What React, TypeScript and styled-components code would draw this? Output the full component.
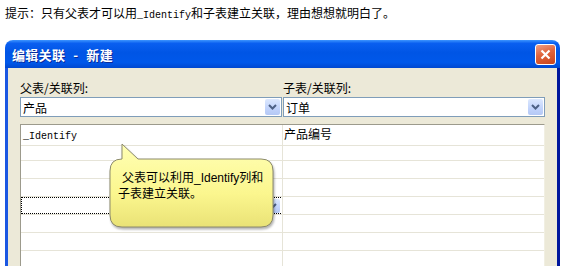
import styled, { createGlobalStyle } from "styled-components";

const GlobalStyle = createGlobalStyle`
  html, body {
    margin: 0;
    padding: 0;
    background: #ffffff;
    overflow: hidden;
  }
  body {
    width: 580px;
    height: 266px;
    font-family: "Noto Sans CJK SC", "Liberation Sans", sans-serif;
    color: #000;
  }
`;

const Hint = styled.p`
  margin: 0;
  height: 40px;
  box-sizing: border-box;
  padding: 5px 0 0 5px;
  font-size: 12px;
  line-height: 16px;
`;

const Mono = styled.span`
  font-family: "Liberation Mono", monospace;
  font-size: 10px;
`;

const Window = styled.div`
  margin-left: 5px;
  width: 555px;
  height: 226px;
  display: flex;
  flex-direction: column;
  border-radius: 8px 8px 0 0;
  overflow: hidden;
`;

const TitleBar = styled.div`
  height: 28px;
  flex: none;
  display: flex;
  align-items: center;
  justify-content: space-between;
  padding: 1px 4px 0 7px;
  box-sizing: border-box;
  background: linear-gradient(
    180deg,
    #3d95ff 0%,
    #0a5ff0 12%,
    #0055e5 45%,
    #0058ea 80%,
    #0048d0 100%
  );
`;

const Title = styled.span`
  color: #fff;
  font-size: 13px;
  font-weight: 700;
  text-shadow: 1px 1px 0 #0a2a9a;
  letter-spacing: 0.3px;
`;

const Sep = styled.span`
  margin: 0 8px;
`;

const CloseButton = styled.div`
  width: 21px;
  height: 21px;
  box-sizing: border-box;
  border: 1px solid #fff;
  border-radius: 3px;
  background: linear-gradient(160deg, #f0a088 0%, #e0643c 45%, #c8441c 100%);
  display: flex;
  align-items: center;
  justify-content: center;
`;

const Body = styled.div`
  flex: 1;
  min-height: 0;
  display: flex;
  flex-direction: column;
  background: #ece9d8;
  border-left: 3px solid #1a57e2;
  border-right: 3px solid #00169c;
  padding: 13px 12px 0 12px;
`;

const Fields = styled.div`
  display: grid;
  grid-template-columns: 262px 1fr;
  column-gap: 1px;
`;

const Field = styled.div`
  display: flex;
  flex-direction: column;
  gap: 2px;
`;

const Label = styled.label`
  font-size: 12px;
  line-height: 14px;
  height: 14px;
`;

const Combo = styled.div`
  height: 20px;
  box-sizing: border-box;
  border: 1px solid #7f9db9;
  background: #fff;
  display: flex;
  align-items: center;
`;

const ComboText = styled.span`
  flex: 1;
  padding-left: 2px;
  font-size: 12px;
`;

const DropButton = styled.div<{ $h?: number }>`
  width: 15px;
  height: ${(p) => p.$h ?? 16}px;
  margin: 1px;
  border-radius: 2px;
  background: linear-gradient(180deg, #dce8fe 0%, #c1d3fb 60%, #b4c8f5 100%);
  display: flex;
  align-items: center;
  justify-content: center;
`;

const Chevron = () => (
  <svg width="9" height="6" viewBox="0 0 9 6">
    <path d="M1 1 L4.5 4.5 L8 1" fill="none" stroke="#4d6185" strokeWidth="2" />
  </svg>
);

const DataGrid = styled.div`
  position: relative;
  flex: 1;
  margin-top: 7px;
  border: 1px solid;
  border-bottom: none;
  border-color: #9c9a8c #f1efe2 #f1efe2 #9c9a8c;
  background: #fff;
  overflow: hidden;
`;

const Row = styled.div`
  display: grid;
  grid-template-columns: 262px 1fr;
  height: 18px;
`;

const Cell = styled.div<{ $first?: boolean }>`
  box-sizing: border-box;
  border-bottom: 1px solid #e6e4d8;
  border-right: ${(p) => (p.$first ? "1px solid #e6e4d8" : "none")};
  padding-left: ${(p) => (p.$first ? 2 : 1)}px;
  font-size: 12px;
  line-height: 17px;
  white-space: nowrap;
`;

const EditCombo = styled.div`
  height: 17px;
  margin-left: -2px;
  margin-right: 1px;
  box-sizing: border-box;
  border: 1px dotted #000;
  border-right: none;
  display: flex;
  justify-content: flex-end;
  align-items: center;
`;

const Balloon = styled.div`
  position: absolute;
  left: 87px;
  top: 17px;
  width: 172px;
  height: 92px;
`;

const BalloonShape = styled.svg`
  position: absolute;
  left: 0;
  top: 0;
  filter: drop-shadow(1px 2px 1px rgba(0, 0, 0, 0.3));
`;

const BalloonText = styled.p`
  position: relative;
  margin: 0;
  padding: 28px 0 0 10px;
  font-family: "Liberation Sans", "Noto Sans CJK SC", sans-serif;
  font-size: 12px;
  line-height: 16px;
  text-indent: 4px;
`;

const rows = [
  ["_Identify", "产品编号"],
  ["", ""],
  ["", ""],
  ["", ""],
  ["edit", ""],
  ["", ""],
  ["", ""],
  ["", ""],
];

export default function App() {
  return (
    <>
      <GlobalStyle />
      <Hint>
        提示：只有父表才可以用<Mono>_Identify</Mono>和子表建立关联，理由想想就明白了。
      </Hint>
      <Window>
        <TitleBar>
          <Title>
            编辑关联<Sep>-</Sep>新建
          </Title>
          <CloseButton>
            <svg width="11" height="11" viewBox="0 0 11 11">
              <path d="M1.5 1.5 L9.5 9.5 M9.5 1.5 L1.5 9.5" stroke="#fff" strokeWidth="2.2" />
            </svg>
          </CloseButton>
        </TitleBar>
        <Body>
          <Fields>
            <Field>
              <Label>父表/关联列:</Label>
              <Combo>
                <ComboText>产品</ComboText>
                <DropButton>
                  <Chevron />
                </DropButton>
              </Combo>
            </Field>
            <Field>
              <Label>子表/关联列:</Label>
              <Combo>
                <ComboText>订单</ComboText>
                <DropButton>
                  <Chevron />
                </DropButton>
              </Combo>
            </Field>
          </Fields>
          <DataGrid>
            {rows.map(([a, b], i) => (
              <Row key={i}>
                <Cell $first>
                  {a === "edit" ? (
                    <EditCombo>
                      <DropButton $h={14}>
                        <Chevron />
                      </DropButton>
                    </EditCombo>
                  ) : a ? (
                    <Mono>{a}</Mono>
                  ) : null}
                </Cell>
                <Cell>{b}</Cell>
              </Row>
            ))}
            <Balloon>
              <BalloonShape width="172" height="92" viewBox="0 0 172 92">
                <defs>
                  <linearGradient id="bg" x1="0" y1="0" x2="0" y2="1">
                    <stop offset="0" stopColor="#ffffb4" />
                    <stop offset="0.6" stopColor="#fbf68e" />
                    <stop offset="1" stopColor="#e9e276" />
                  </linearGradient>
                </defs>
                <path
                  d="M14 2 L30 17 H153 Q165 17 165 29 V73 Q165 85 153 85 H14 Q2 85 2 73 V29 Q2 17 14 17 Z"
                  fill="url(#bg)"
                  stroke="#8c8a6c"
                  strokeWidth="1"
                />
              </BalloonShape>
              <BalloonText>
                父表可以利用_Identify列和
                <br />
                子表建立关联。
              </BalloonText>
            </Balloon>
          </DataGrid>
        </Body>
      </Window>
    </>
  );
}
